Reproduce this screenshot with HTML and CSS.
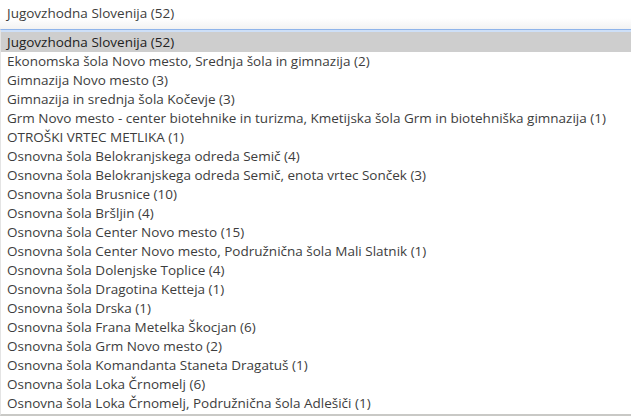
FILE: index.html
```html
<!DOCTYPE html>
<html lang="sl">
<head>
    <meta charset="UTF-8">
    <title>Izbira šole</title>
    <link rel="stylesheet" href="styles.css">
</head>
<body>
    <div class="select">
        <div class="select-value">Jugovzhodna Slovenija (52)</div>
        <ul class="options">
            <li class="option selected">Jugovzhodna Slovenija (52)</li>
            <li class="option">Ekonomska šola Novo mesto, Srednja šola in gimnazija (2)</li>
            <li class="option">Gimnazija Novo mesto (3)</li>
            <li class="option">Gimnazija in srednja šola Kočevje (3)</li>
            <li class="option">Grm Novo mesto - center biotehnike in turizma, Kmetijska šola Grm in biotehniška gimnazija (1)</li>
            <li class="option">OTROŠKI VRTEC METLIKA (1)</li>
            <li class="option">Osnovna šola Belokranjskega odreda Semič (4)</li>
            <li class="option">Osnovna šola Belokranjskega odreda Semič, enota vrtec Sonček (3)</li>
            <li class="option">Osnovna šola Brusnice (10)</li>
            <li class="option">Osnovna šola Bršljin (4)</li>
            <li class="option">Osnovna šola Center Novo mesto (15)</li>
            <li class="option">Osnovna šola Center Novo mesto, Podružnična šola Mali Slatnik (1)</li>
            <li class="option">Osnovna šola Dolenjske Toplice (4)</li>
            <li class="option">Osnovna šola Dragotina Ketteja (1)</li>
            <li class="option">Osnovna šola Drska (1)</li>
            <li class="option">Osnovna šola Frana Metelka Škocjan (6)</li>
            <li class="option">Osnovna šola Grm Novo mesto (2)</li>
            <li class="option">Osnovna šola Komandanta Staneta Dragatuš (1)</li>
            <li class="option">Osnovna šola Loka Črnomelj (6)</li>
            <li class="option">Osnovna šola Loka Črnomelj, Podružnična šola Adlešiči (1)</li>
        </ul>
    </div>
</body>
</html>
```

FILE: styles.css
```css
body {
    margin: 0;
    background: #fff;
    font-family: 'Open Sans', sans-serif;
    font-size: 13.5px;
    color: #3d3d3d;
}
.select {
    width: 631px;
}
.select-value {
    height: 29px;
    line-height: 26px;
    padding-left: 7px;
    background: linear-gradient(to bottom, #fff 0, #fff 18px, #f2f2f2 29px);
}
.options {
    list-style: none;
    margin: 0;
    padding: 0;
    border-top: 1px solid #8fb4ea;
    box-shadow: inset 0 2px 0 #cddff7;
    border-bottom: 2px solid #c9c9c6;
    border-left: 1px solid #e4e4e4;
    height: 384px;
    overflow: hidden;
}
.option {
    height: 19px;
    line-height: 19px;
    padding-left: 6px;
    white-space: nowrap;
}
.option.selected {
    background: #cecece;
    margin-top: 2px;
    height: 20px;
    line-height: 20px;
    color: #222;
}
```
